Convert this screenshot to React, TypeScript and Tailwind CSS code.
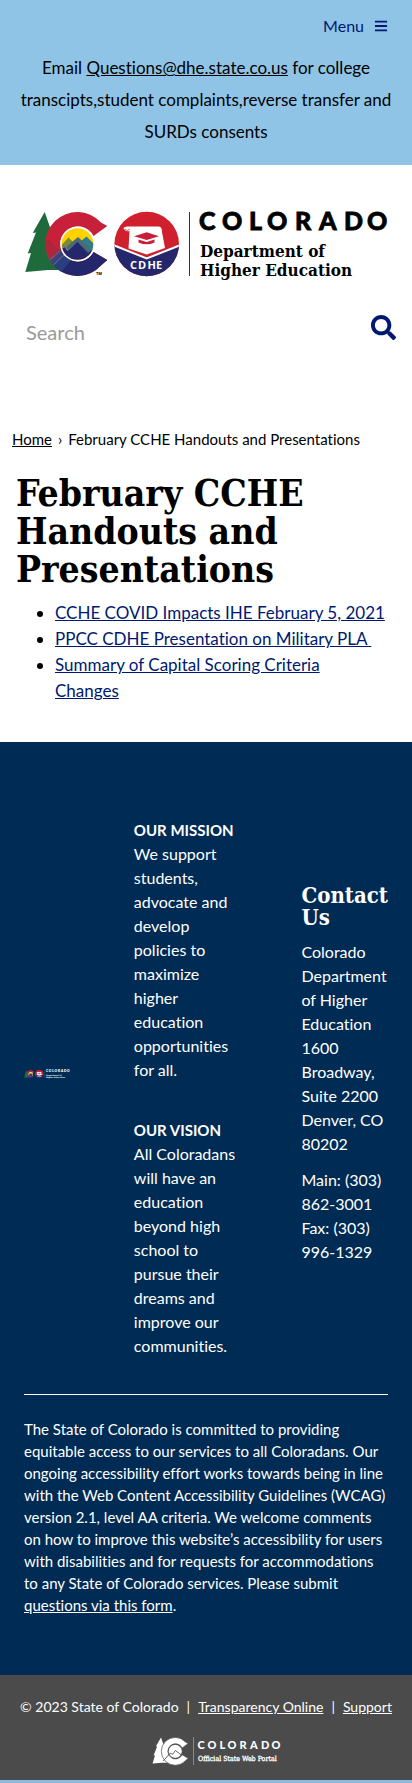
import type { ReactNode } from "react";
import { FaSearch, FaBars } from "react-icons/fa";

const serif = "font-['DejaVu_Serif_Condensed','DejaVu_Serif',serif]";

const C_SHAPE =
  "M77 11.5 A32 32 0 1 0 77 54.5 L83.3 49 L69.5 41 A17.5 17.5 0 1 1 69.5 25 L83.3 15 Z";
const TREE = "M20.7 1 L8.7 22 L12 21.4 L3.7 42.6 L7 42 L1.3 61 L24 59 L50 59 L32 22 L28 22 Z";

function DepartmentLogo({ id, tone }: { id: string; tone: "dark" | "light" }) {
  const ink = tone === "dark" ? "fill-black" : "fill-white";
  const line = tone === "dark" ? "stroke-black" : "stroke-white";
  return (
    <svg viewBox="0 -8 366 80" className="block h-auto w-full" role="img" aria-label="Colorado Department of Higher Education">
      <defs>
        <clipPath id={`${id}-c`}><path d={C_SHAPE} /></clipPath>
        <clipPath id={`${id}-sun`}><circle cx="53.5" cy="33" r="15.8" /></clipPath>
        <clipPath id={`${id}-seal`}><circle cx="122.7" cy="33" r="32.3" /></clipPath>
      </defs>
      <path d={TREE} fill="#1f6a3b" />
      <path d={C_SHAPE} fill="#c8203a" />
      <g clipPath={`url(#${id}-c)`}>
        <path d="M26 54 L38 41 L54 50 L70 38 H90 V70 H20 Z" fill="#24276b" />
        <path d="M20 34 L24 28 L40 44 L30 55 Z" fill="#9b2c3a" opacity="0.6" />
        <path d="M24 50 L37 38 L48 48 L36 62 Z" fill="#2b4a86" opacity="0.75" />
        <path d="M22 52 L36 40 M27 56 L40 44" stroke="#6d7fb0" strokeWidth="0.8" />
      </g>
      <circle cx="53.5" cy="33" r="17.4" fill="#fff" />
      <g clipPath={`url(#${id}-sun)`}>
        <rect x="36" y="15" width="36" height="36" fill="#ffd200" />
        <path d="M34 38 L44.5 26.5 L56 38 Z" fill="#7d8a35" />
        <path d="M50 36 L62.5 25.5 L72 35 L72 44 L50 44 Z" fill="#2f7d8c" />
        <path d="M42 36 L54 26 L66 37 L60 46 L46 44 Z" fill="#4a6a76" />
        <path d="M34 42 L40 36 L44 40 L53.5 31 L64 42 L70 37 L74 54 H34 Z" fill="#24276b" />
        <path d="M36 40 L41 35 L44 39" fill="none" stroke="#5b79a8" strokeWidth="1" />
      </g>
      <text x="72" y="64" className={`${ink} font-['Open_Sans'] text-[4px] font-bold`}>TM</text>

      <circle cx="122.7" cy="33" r="32.3" fill="#d0202e" />
      <g clipPath={`url(#${id}-seal)`}>
        <path d="M88 33.5 L122.7 46.5 L158 33.5 V70 H88 Z" fill="#24276b" />
        <path d="M88 33.5 L122.7 47.5 L158 33.5" fill="none" stroke="#fff" strokeWidth="2" />
      </g>
      <path d="M99.3 17.2 Q101 15.3 104 15.6 L135 15.6 Q138 16 138 21 L141 37 L122.7 43.5 L104.5 37.5 L105.5 20 Q101.5 21 99.3 17.2 Z" fill="#fff" />
      <path d="M101 18.6 Q103.5 20.6 105.8 18.2" fill="none" stroke="#d0202e" strokeWidth="0.8" />
      <path d="M110 25.2 L122.7 21.2 L135 25.2 L122.7 29 Z" fill="#c8203a" />
      <path d="M114.5 28.4 L122.7 31 L130.5 28.4 V31.4 Q122.7 35.2 114.5 31.4 Z" fill="#c8203a" />
      <text x="106 114 123.5 132" y="58.2" className="fill-white font-['Open_Sans'] text-[11px] font-bold">CDHE</text>

      <path d="M165.5 1 V65" className={line} strokeWidth="0.8" />
      <text x="175 198 225 243 271 295 320 343" y="19" strokeWidth="0.8" className={`${ink} ${line} font-['Lato'] text-[25px] font-black`}>COLORADO</text>
      <text x="176" y="46" className={`${ink} ${serif} text-[17px] font-bold`}>Department of</text>
      <text x="176" y="65" className={`${ink} ${serif} text-[17px] font-bold`}>Higher Education</text>
    </svg>
  );
}

function PortalLogo() {
  return (
    <svg viewBox="0 0 136 29" className="block h-[29px] w-[136px]" role="img" aria-label="Colorado Official State Web Portal">
      <g transform="scale(0.435)">
        <path d={TREE} fill="#fff" />
        <path d={C_SHAPE} fill="#fff" stroke="#4b4b4b" strokeWidth="1.6" />
        <circle cx="53.5" cy="33" r="16" fill="#fff" stroke="#4b4b4b" strokeWidth="2" />
        <path d="M26 55 L42 37 L47 40 L54 31 L68 42" fill="none" stroke="#4b4b4b" strokeWidth="2" />
      </g>
      <path d="M41.5 0 V28" stroke="#8a8a8a" strokeWidth="1" />
      <text x="45.5 55.5 67.5 75.5 87.5 98 109 119.5" y="12" className="fill-white font-['Lato'] text-[11px] font-black">COLORADO</text>
      <text x="46" y="24" strokeWidth="0.3" className={`fill-white stroke-white ${serif} text-[7px]`}>Official State Web Portal</text>
    </svg>
  );
}

function DocLink({ children }: { children: ReactNode }) {
  return (
    <li>
      <a href="#" className="text-[#001970] underline">{children}</a>
    </li>
  );
}

export default function App() {
  return (
    <div className="bg-white font-['Lato','Open_Sans',sans-serif] text-black [font-variant-ligatures:none]">
      <div className="bg-[#8fc4e7] pt-3 pb-[17px]">
        <div className="flex justify-end px-6">
          <button type="button" className="flex items-center gap-2.5 text-base leading-7 text-[#001970]">
            Menu
            <FaBars className="size-3.5" aria-hidden="true" />
          </button>
        </div>
        <p className="mt-3 px-4 text-center text-[17px] leading-8">
          Email{" "}
          <a href="mailto:Questions@dhe.state.co.us" className="underline">Questions@dhe.state.co.us</a>{" "}
          for college transcipts,student complaints,reverse transfer and SURDs consents
        </p>
      </div>

      <header className="pt-[38px]">
        <a href="#" className="block pr-[22px] pl-6">
          <DepartmentLogo id="top" tone="dark" />
        </a>
        <form className="mt-7 flex items-start justify-between pr-4 pl-[26px]">
          <label htmlFor="q" className="sr-only">Search</label>
          <input id="q" type="text" placeholder="Search" className="h-[42px] min-w-0 flex-1 text-xl placeholder:text-[#999]" />
          <button type="submit" aria-label="Submit search" className="pt-1 text-[#001970]">
            <FaSearch className="size-[25px]" />
          </button>
        </form>
      </header>

      <main className="pt-[74px] pb-[38px]">
        <nav aria-label="Breadcrumb" className="flex gap-1.5 px-3 text-[15px] leading-6">
          <a href="#" className="underline">Home</a>
          <span>›</span>
          <span>February CCHE Handouts and Presentations</span>
        </nav>
        <h1 className={`${serif} mt-[23px] px-4 text-[37px] leading-[38px] font-bold`}>
          February CCHE Handouts and Presentations
        </h1>
        <ul className="mt-3 list-disc pr-6 pl-[55px] text-[17px] leading-[26px]">
          <DocLink>CCHE COVID Impacts IHE February 5, 2021</DocLink>
          <DocLink>PPCC CDHE Presentation on Military PLA&nbsp;</DocLink>
          <DocLink>Summary of Capital Scoring Criteria<br />Changes</DocLink>
        </ul>
      </main>

      <footer>
        <div className="bg-[#002b54] px-6 pt-12 pb-[59px] text-white">
          <div className="grid grid-cols-[46fr_104fr_86fr] items-center gap-16 text-base leading-6">
            <DepartmentLogo id="foot" tone="light" />
            <div className="pt-7">
              <h2 className="text-[15px] leading-6 font-bold">OUR MISSION</h2>
              <p>We support students, advocate and develop policies to maximize higher education opportunities for all.</p>
              <h2 className="mt-9 text-[15px] leading-6 font-bold">OUR VISION</h2>
              <p>All Coloradans will have an education beyond high school to pursue their dreams and improve our communities.</p>
            </div>
            <div>
              <h2 className={`${serif} text-[22px] leading-[22px] font-bold`}>Contact Us</h2>
              <p className="mt-3">Colorado Department of Higher Education<br />1600 Broadway, Suite 2200<br />Denver, CO 80202</p>
              <p className="mt-3">Main: (303) 862-3001<br />Fax: (303) 996-1329</p>
            </div>
          </div>
          <hr className="mt-9 border-white" />
          <p className="mt-[23px] text-[15px] leading-[22px]">
            The State of Colorado is committed to providing equitable access to our services to all Coloradans. Our ongoing accessibility effort works towards being in line with the Web Content Accessibility Guidelines (WCAG) version 2.1, level AA criteria. We welcome comments on how to improve this website’s accessibility for users with disabilities and for requests for accommodations to any State of Colorado services. Please submit{" "}
            <a href="#" className="underline">questions via this form</a>.
          </p>
        </div>
        <div className="flex flex-col items-center border-b-[3px] border-[#8fb8dc] bg-[#4b4b4b] pt-5 pb-3.5 text-white">
          <p className="flex gap-2 text-sm leading-6">
            <span>© 2023 State of Colorado</span>
            <span>|</span>
            <a href="#" className="underline">Transparency Online</a>
            <span>|</span>
            <a href="#" className="underline">Support</a>
          </p>
          <a href="#" className="mt-[18px] ml-7"><PortalLogo /></a>
        </div>
      </footer>
    </div>
  );
}
